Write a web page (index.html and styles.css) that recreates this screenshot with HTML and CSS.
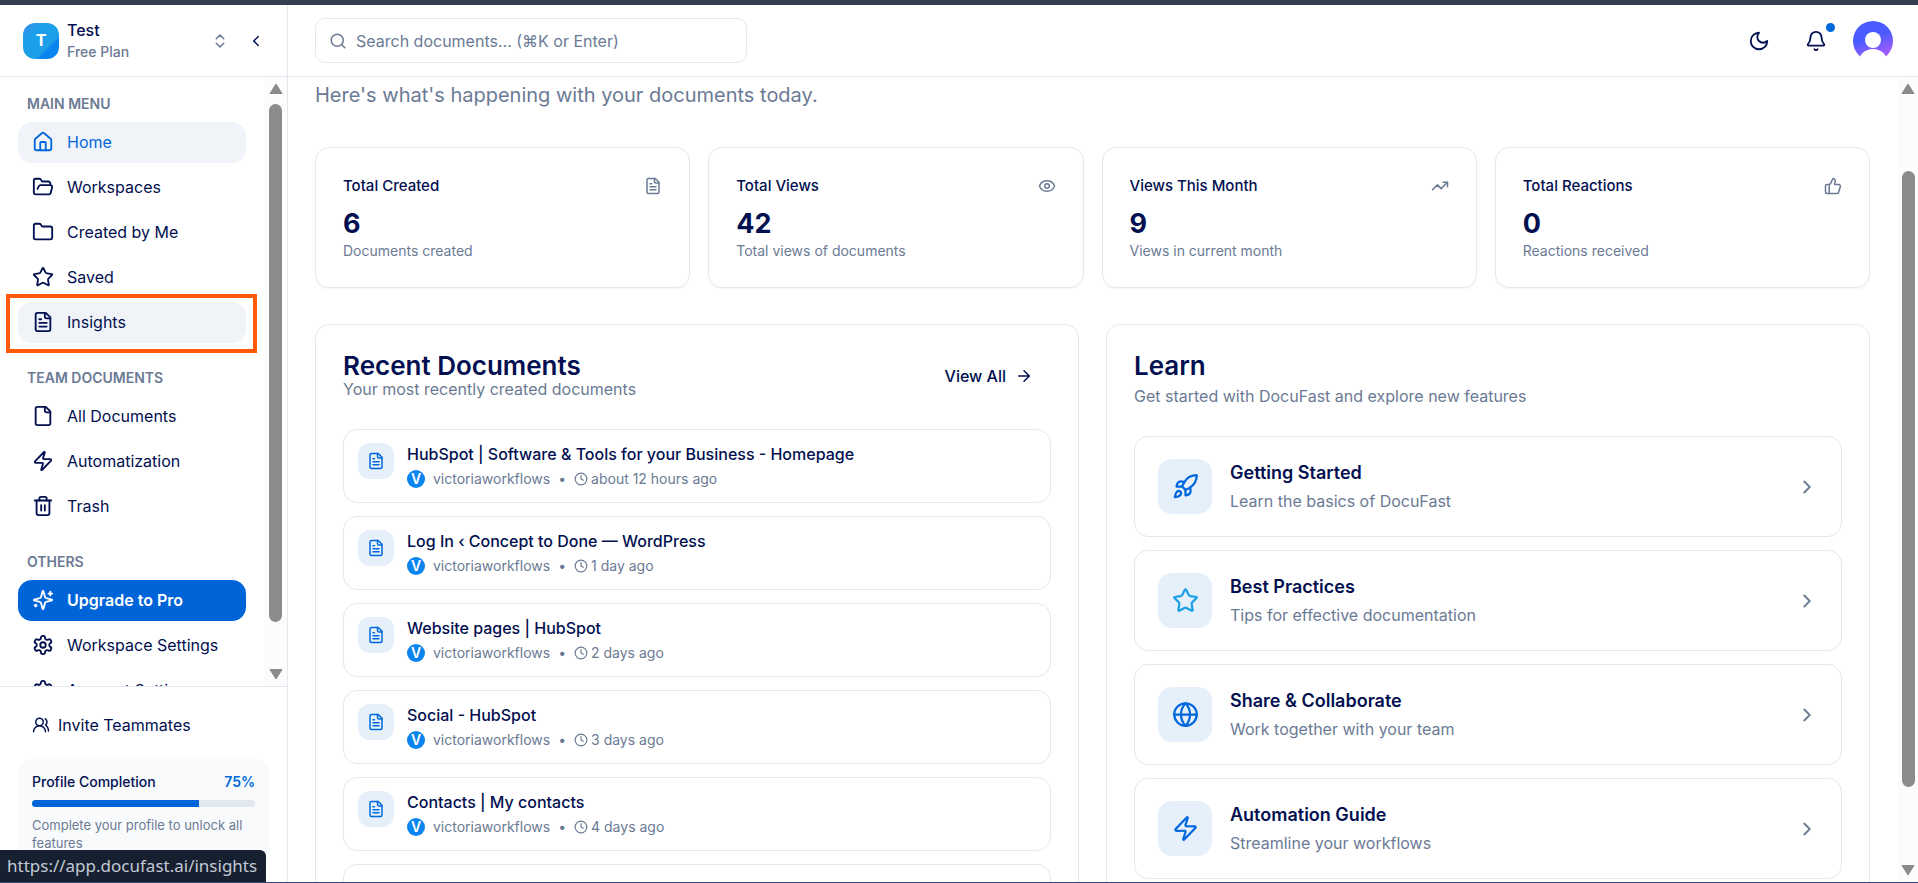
FILE: index.html
```html
<!DOCTYPE html>
<html lang="en">

<head>
    <meta charset="UTF-8">
    <meta name="viewport" content="width=device-width, initial-scale=1.0">
    <title>DocuFast</title>
    <link rel="stylesheet" href="styles.css">
</head>

<body>
    <!-- Icon set -->
    <svg class="icon-set" aria-hidden="true">
        <symbol id="home" viewBox="0 0 24 24"><path d="M15 21v-8a1 1 0 0 0-1-1h-4a1 1 0 0 0-1 1v8"/><path d="M3 10a2 2 0 0 1 .709-1.528l7-5.999a2 2 0 0 1 2.582 0l7 5.999A2 2 0 0 1 21 10v9a2 2 0 0 1-2 2H5a2 2 0 0 1-2-2z"/></symbol>
        <symbol id="folder-open" viewBox="0 0 24 24"><path d="m6 14 1.5-2.9A2 2 0 0 1 9.24 10H20a2 2 0 0 1 1.94 2.5l-1.54 6a2 2 0 0 1-1.95 1.5H4a2 2 0 0 1-2-2V5a2 2 0 0 1 2-2h3.9a2 2 0 0 1 1.69.9l.81 1.2a2 2 0 0 0 1.67.9H18a2 2 0 0 1 2 2v2"/></symbol>
        <symbol id="folder" viewBox="0 0 24 24"><path d="M20 20a2 2 0 0 0 2-2V8a2 2 0 0 0-2-2h-7.9a2 2 0 0 1-1.69-.9L9.6 3.9A2 2 0 0 0 7.93 3H4a2 2 0 0 0-2 2v13a2 2 0 0 0 2 2Z"/></symbol>
        <symbol id="star" viewBox="0 0 24 24"><path d="M11.525 2.295a.53.53 0 0 1 .95 0l2.31 4.679a2.123 2.123 0 0 0 1.595 1.16l5.166.756a.53.53 0 0 1 .294.904l-3.736 3.638a2.123 2.123 0 0 0-.611 1.878l.882 5.14a.53.53 0 0 1-.771.56l-4.618-2.428a2.122 2.122 0 0 0-1.973 0L6.396 21.01a.53.53 0 0 1-.77-.56l.881-5.139a2.122 2.122 0 0 0-.611-1.879L2.16 9.795a.53.53 0 0 1 .294-.906l5.165-.755a2.122 2.122 0 0 0 1.597-1.16z"/></symbol>
        <symbol id="file-text" viewBox="0 0 24 24"><path d="M15 2H6a2 2 0 0 0-2 2v16a2 2 0 0 0 2 2h12a2 2 0 0 0 2-2V7Z"/><path d="M14 2v4a2 2 0 0 0 2 2h4"/><path d="M10 9H8"/><path d="M16 13H8"/><path d="M16 17H8"/></symbol>
        <symbol id="file" viewBox="0 0 24 24"><path d="M15 2H6a2 2 0 0 0-2 2v16a2 2 0 0 0 2 2h12a2 2 0 0 0 2-2V7Z"/><path d="M14 2v4a2 2 0 0 0 2 2h4"/></symbol>
        <symbol id="zap" viewBox="0 0 24 24"><path d="M4 14a1 1 0 0 1-.78-1.63l9.9-10.2a.5.5 0 0 1 .86.46l-1.92 6.02A1 1 0 0 0 13 10h7a1 1 0 0 1 .78 1.63l-9.9 10.2a.5.5 0 0 1-.86-.46l1.92-6.02A1 1 0 0 0 11 14z"/></symbol>
        <symbol id="trash" viewBox="0 0 24 24"><path d="M3 6h18"/><path d="M19 6v14c0 1-1 2-2 2H7c-1 0-2-1-2-2V6"/><path d="M8 6V4c0-1 1-2 2-2h4c1 0 2 1 2 2v2"/><path d="M10 11v6"/><path d="M14 11v6"/></symbol>
        <symbol id="sparkles" viewBox="0 0 24 24"><path d="M9.937 15.5A2 2 0 0 0 8.5 14.063l-6.135-1.582a.5.5 0 0 1 0-.962L8.5 9.936A2 2 0 0 0 9.937 8.5l1.582-6.135a.5.5 0 0 1 .963 0L14.063 8.5A2 2 0 0 0 15.5 9.937l6.135 1.581a.5.5 0 0 1 0 .964L15.5 14.063a2 2 0 0 0-1.437 1.437l-1.582 6.135a.5.5 0 0 1-.963 0z"/><path d="M20 3v4"/><path d="M22 5h-4"/><path d="M4 17v2"/><path d="M5 18H3"/></symbol>
        <symbol id="settings" viewBox="0 0 24 24"><path d="M12.22 2h-.44a2 2 0 0 0-2 2v.18a2 2 0 0 1-1 1.73l-.43.25a2 2 0 0 1-2 0l-.15-.08a2 2 0 0 0-2.73.73l-.22.38a2 2 0 0 0 .73 2.73l.15.1a2 2 0 0 1 1 1.72v.51a2 2 0 0 1-1 1.74l-.15.09a2 2 0 0 0-.73 2.73l.22.38a2 2 0 0 0 2.73.73l.15-.08a2 2 0 0 1 2 0l.43.25a2 2 0 0 1 1 1.73V20a2 2 0 0 0 2 2h.44a2 2 0 0 0 2-2v-.18a2 2 0 0 1 1-1.73l.43-.25a2 2 0 0 1 2 0l.15.08a2 2 0 0 0 2.73-.73l.22-.39a2 2 0 0 0-.73-2.73l-.15-.08a2 2 0 0 1-1-1.74v-.5a2 2 0 0 1 1-1.74l.15-.09a2 2 0 0 0 .73-2.73l-.22-.38a2 2 0 0 0-2.73-.73l-.15.08a2 2 0 0 1-2 0l-.43-.25a2 2 0 0 1-1-1.73V4a2 2 0 0 0-2-2z"/><circle cx="12" cy="12" r="3"/></symbol>
        <symbol id="users" viewBox="0 0 24 24"><path d="M18 21a8 8 0 0 0-16 0"/><circle cx="10" cy="8" r="5"/><path d="M22 20c0-3.37-2-6.5-4-8a5 5 0 0 0-.45-8.3"/></symbol>
        <symbol id="search" viewBox="0 0 24 24"><circle cx="11" cy="11" r="8"/><path d="m21 21-4.3-4.3"/></symbol>
        <symbol id="up-down" viewBox="0 0 24 24"><path d="m7 15 5 5 5-5"/><path d="m7 9 5-5 5 5"/></symbol>
        <symbol id="chevron-left" viewBox="0 0 24 24"><path d="m15 18-6-6 6-6"/></symbol>
        <symbol id="chevron-right" viewBox="0 0 24 24"><path d="m9 18 6-6-6-6"/></symbol>
        <symbol id="arrow-right" viewBox="0 0 24 24"><path d="M5 12h14"/><path d="m12 5 7 7-7 7"/></symbol>
        <symbol id="eye" viewBox="0 0 24 24"><path d="M2.062 12.348a1 1 0 0 1 0-.696 10.75 10.75 0 0 1 19.876 0 1 1 0 0 1 0 .696 10.75 10.75 0 0 1-19.876 0"/><circle cx="12" cy="12" r="3"/></symbol>
        <symbol id="trending-up" viewBox="0 0 24 24"><path d="m22 7-8.5 8.5-5-5L2 17"/><path d="M16 7h6v6"/></symbol>
        <symbol id="thumbs-up" viewBox="0 0 24 24"><path d="M7 10v12"/><path d="M15 5.88 14 10h5.83a2 2 0 0 1 1.92 2.56l-2.33 8A2 2 0 0 1 17.5 22H4a2 2 0 0 1-2-2v-8a2 2 0 0 1 2-2h2.76a2 2 0 0 0 1.79-1.11L12 2a3.13 3.13 0 0 1 3 3.88Z"/></symbol>
        <symbol id="moon" viewBox="0 0 24 24"><path d="M12 3a6 6 0 0 0 9 9 9 9 0 1 1-9-9Z"/></symbol>
        <symbol id="bell" viewBox="0 0 24 24"><path d="M10.268 21a2 2 0 0 0 3.464 0"/><path d="M3.262 15.326A1 1 0 0 0 4 17h16a1 1 0 0 0 .74-1.673C19.41 13.956 18 12.499 18 8A6 6 0 0 0 6 8c0 4.499-1.411 5.956-2.738 7.326"/></symbol>
        <symbol id="clock" viewBox="0 0 24 24"><circle cx="12" cy="12" r="10"/><path d="M12 6v6l4 2"/></symbol>
        <symbol id="rocket" viewBox="0 0 24 24"><path d="M4.5 16.5c-1.5 1.26-2 5-2 5s3.74-.5 5-2c.71-.84.7-2.13-.09-2.91a2.18 2.18 0 0 0-2.91-.09z"/><path d="m12 15-3-3a22 22 0 0 1 2-3.95A12.88 12.88 0 0 1 22 2c0 2.72-.78 7.5-6 11a22.35 22.35 0 0 1-4 2z"/><path d="M9 12H4s.55-3.03 2-4c1.62-1.08 5 0 5 0"/><path d="M12 15v5s3.03-.55 4-2c1.08-1.62 0-5 0-5"/></symbol>
        <symbol id="globe" viewBox="0 0 24 24"><circle cx="12" cy="12" r="10"/><path d="M12 2a14.5 14.5 0 0 0 0 20 14.5 14.5 0 0 0 0-20"/><path d="M2 12h20"/></symbol>
        <symbol id="scroll-up" viewBox="0 0 14 12"><path d="M7 1 13 10.5H1Z"/></symbol>
        <symbol id="scroll-down" viewBox="0 0 14 12"><path d="M7 11 1 1.5h12Z"/></symbol>
    </svg>

    <div class="app">
        <aside class="sidebar">
            <div class="workspace">
                <div class="workspace-logo">T</div>
                <div class="workspace-info">
                    <div class="workspace-name">Test</div>
                    <div class="workspace-plan">Free Plan</div>
                </div>
                <button class="icon-btn muted" aria-label="Switch workspace"><svg class="icon icon-sm"><use href="#up-down"/></svg></button>
                <button class="icon-btn" aria-label="Collapse sidebar"><svg class="icon icon-sm"><use href="#chevron-left"/></svg></button>
            </div>

            <div class="sidebar-scroll">
                <nav class="menu">
                    <section class="menu-group">
                        <h2 class="menu-label">MAIN MENU</h2>
                        <a class="menu-item active" href="#"><svg class="icon"><use href="#home"/></svg>Home</a>
                        <a class="menu-item" href="#"><svg class="icon"><use href="#folder-open"/></svg>Workspaces</a>
                        <a class="menu-item" href="#"><svg class="icon"><use href="#folder"/></svg>Created by Me</a>
                        <a class="menu-item" href="#"><svg class="icon"><use href="#star"/></svg>Saved</a>
                        <a class="menu-item hovered" href="#"><svg class="icon"><use href="#file-text"/></svg>Insights</a>
                    </section>
                    <section class="menu-group">
                        <h2 class="menu-label">TEAM DOCUMENTS</h2>
                        <a class="menu-item" href="#"><svg class="icon"><use href="#file"/></svg>All Documents</a>
                        <a class="menu-item" href="#"><svg class="icon"><use href="#zap"/></svg>Automatization</a>
                        <a class="menu-item" href="#"><svg class="icon"><use href="#trash"/></svg>Trash</a>
                    </section>
                    <section class="menu-group">
                        <h2 class="menu-label">OTHERS</h2>
                        <a class="menu-item upgrade" href="#"><svg class="icon"><use href="#sparkles"/></svg>Upgrade to Pro</a>
                        <a class="menu-item" href="#"><svg class="icon"><use href="#settings"/></svg>Workspace Settings</a>
                        <a class="menu-item" href="#"><svg class="icon"><use href="#settings"/></svg>Account Settings</a>
                    </section>
                </nav>
                <div class="scrollbar">
                    <svg class="scroll-arrow"><use href="#scroll-up"/></svg>
                    <div class="scroll-track menu-track"><div class="scroll-thumb"></div></div>
                    <svg class="scroll-arrow"><use href="#scroll-down"/></svg>
                </div>
            </div>

            <div class="sidebar-footer">
                <a class="invite" href="#"><svg class="icon icon-sm"><use href="#users"/></svg>Invite Teammates</a>
                <div class="profile-card">
                    <div class="profile-head">
                        <span>Profile Completion</span>
                        <span class="profile-percent">75%</span>
                    </div>
                    <div class="progress"><div class="progress-bar" style="width: 75%"></div></div>
                    <p class="profile-text">Complete your profile to unlock all features</p>
                </div>
            </div>
        </aside>

        <div class="page">
            <header class="topbar">
                <label class="search">
                    <svg class="icon icon-sm"><use href="#search"/></svg>
                    <input type="text" placeholder="Search documents... (⌘K or Enter)" aria-label="Search documents">
                </label>
                <div class="topbar-actions">
                    <button class="action-btn" aria-label="Toggle dark mode"><svg class="icon"><use href="#moon"/></svg></button>
                    <button class="action-btn" aria-label="Notifications"><svg class="icon"><use href="#bell"/></svg><span class="dot"></span></button>
                    <button class="action-btn" aria-label="Account">
                        <svg class="avatar" viewBox="0 0 40 40">
                            <defs>
                                <linearGradient id="avatar-fill" x1="0.3" y1="0" x2="0.7" y2="1">
                                    <stop offset="0.45" stop-color="#4a5cff"/>
                                    <stop offset="0.9" stop-color="#9a5cff"/>
                                </linearGradient>
                                <clipPath id="avatar-clip"><circle cx="20" cy="20" r="20"/></clipPath>
                            </defs>
                            <g clip-path="url(#avatar-clip)">
                                <rect width="40" height="36" fill="url(#avatar-fill)"/>
                                <circle cx="20" cy="19" r="8" fill="#fff"/>
                                <circle cx="20" cy="43.5" r="15.4" fill="#fff"/>
                            </g>
                        </svg>
                    </button>
                </div>
            </header>

            <div class="page-scroll">
                <main class="content">
                    <p class="intro">Here's what's happening with your documents today.</p>

                    <div class="stats">
                        <div class="stat">
                            <div class="stat-head"><h3>Total Created</h3><svg class="icon icon-sm"><use href="#file-text"/></svg></div>
                            <div class="stat-value">6</div>
                            <p>Documents created</p>
                        </div>
                        <div class="stat">
                            <div class="stat-head"><h3>Total Views</h3><svg class="icon icon-sm"><use href="#eye"/></svg></div>
                            <div class="stat-value">42</div>
                            <p>Total views of documents</p>
                        </div>
                        <div class="stat">
                            <div class="stat-head"><h3>Views This Month</h3><svg class="icon icon-sm"><use href="#trending-up"/></svg></div>
                            <div class="stat-value">9</div>
                            <p>Views in current month</p>
                        </div>
                        <div class="stat">
                            <div class="stat-head"><h3>Total Reactions</h3><svg class="icon icon-sm"><use href="#thumbs-up"/></svg></div>
                            <div class="stat-value">0</div>
                            <p>Reactions received</p>
                        </div>
                    </div>

                    <div class="panels">
                        <section class="panel">
                            <div class="recent-head">
                                <div>
                                    <h2>Recent Documents</h2>
                                    <p>Your most recently created documents</p>
                                </div>
                                <button class="view-all">View All <svg class="icon icon-sm"><use href="#arrow-right"/></svg></button>
                            </div>
                            <div class="list">
                                <a class="doc" href="#">
                                    <span class="doc-icon"><svg class="icon icon-sm"><use href="#file-text"/></svg></span>
                                    <span class="doc-body">
                                        <span class="doc-title">HubSpot | Software &amp; Tools for your Business - Homepage</span>
                                        <span class="doc-meta"><span class="user-badge">V</span>victoriaworkflows<span class="bullet">•</span><span class="doc-time"><svg class="icon icon-xs"><use href="#clock"/></svg>about 12 hours ago</span></span>
                                    </span>
                                </a>
                                <a class="doc" href="#">
                                    <span class="doc-icon"><svg class="icon icon-sm"><use href="#file-text"/></svg></span>
                                    <span class="doc-body">
                                        <span class="doc-title">Log In ‹ Concept to Done — WordPress</span>
                                        <span class="doc-meta"><span class="user-badge">V</span>victoriaworkflows<span class="bullet">•</span><span class="doc-time"><svg class="icon icon-xs"><use href="#clock"/></svg>1 day ago</span></span>
                                    </span>
                                </a>
                                <a class="doc" href="#">
                                    <span class="doc-icon"><svg class="icon icon-sm"><use href="#file-text"/></svg></span>
                                    <span class="doc-body">
                                        <span class="doc-title">Website pages | HubSpot</span>
                                        <span class="doc-meta"><span class="user-badge">V</span>victoriaworkflows<span class="bullet">•</span><span class="doc-time"><svg class="icon icon-xs"><use href="#clock"/></svg>2 days ago</span></span>
                                    </span>
                                </a>
                                <a class="doc" href="#">
                                    <span class="doc-icon"><svg class="icon icon-sm"><use href="#file-text"/></svg></span>
                                    <span class="doc-body">
                                        <span class="doc-title">Social - HubSpot</span>
                                        <span class="doc-meta"><span class="user-badge">V</span>victoriaworkflows<span class="bullet">•</span><span class="doc-time"><svg class="icon icon-xs"><use href="#clock"/></svg>3 days ago</span></span>
                                    </span>
                                </a>
                                <a class="doc" href="#">
                                    <span class="doc-icon"><svg class="icon icon-sm"><use href="#file-text"/></svg></span>
                                    <span class="doc-body">
                                        <span class="doc-title">Contacts | My contacts</span>
                                        <span class="doc-meta"><span class="user-badge">V</span>victoriaworkflows<span class="bullet">•</span><span class="doc-time"><svg class="icon icon-xs"><use href="#clock"/></svg>4 days ago</span></span>
                                    </span>
                                </a>
                                <a class="doc" href="#" aria-label="Document"></a>
                            </div>
                        </section>

                        <section class="panel">
                            <div class="learn-head">
                                <h2>Learn</h2>
                                <p>Get started with DocuFast and explore new features</p>
                            </div>
                            <div class="list">
                                <a class="guide" href="#">
                                    <span class="guide-icon"><svg class="icon icon-lg"><use href="#rocket"/></svg></span>
                                    <span class="guide-body"><span class="guide-title">Getting Started</span><span class="guide-text">Learn the basics of DocuFast</span></span>
                                    <svg class="icon"><use href="#chevron-right"/></svg>
                                </a>
                                <a class="guide" href="#">
                                    <span class="guide-icon sky"><svg class="icon icon-lg"><use href="#star"/></svg></span>
                                    <span class="guide-body"><span class="guide-title">Best Practices</span><span class="guide-text">Tips for effective documentation</span></span>
                                    <svg class="icon"><use href="#chevron-right"/></svg>
                                </a>
                                <a class="guide" href="#">
                                    <span class="guide-icon"><svg class="icon icon-lg"><use href="#globe"/></svg></span>
                                    <span class="guide-body"><span class="guide-title">Share &amp; Collaborate</span><span class="guide-text">Work together with your team</span></span>
                                    <svg class="icon"><use href="#chevron-right"/></svg>
                                </a>
                                <a class="guide" href="#">
                                    <span class="guide-icon"><svg class="icon icon-lg"><use href="#zap"/></svg></span>
                                    <span class="guide-body"><span class="guide-title">Automation Guide</span><span class="guide-text">Streamline your workflows</span></span>
                                    <svg class="icon"><use href="#chevron-right"/></svg>
                                </a>
                            </div>
                        </section>
                    </div>
                </main>
                <div class="scrollbar">
                    <svg class="scroll-arrow"><use href="#scroll-up"/></svg>
                    <div class="scroll-track page-track"><div class="scroll-thumb"></div></div>
                    <svg class="scroll-arrow"><use href="#scroll-down"/></svg>
                </div>
            </div>
        </div>
    </div>

    <div class="link-status">https://app.docufast.ai/insights</div>
</body>

</html>
```
FILE: styles.css
```css
* {
    box-sizing: border-box;
}

body {
    margin: 0;
    font-family: Inter, "Liberation Sans", sans-serif;
    font-size: 16px;
    line-height: 22px;
    color: #020f50;
    background-color: #fff;
}

h2,
h3,
p {
    margin: 0;
}

a {
    color: inherit;
    text-decoration: none;
}

button {
    padding: 0;
    font: inherit;
    color: inherit;
    background: none;
    border: none;
    cursor: pointer;
}

/* Icons */
.icon-set {
    display: none;
}

.icon {
    flex: none;
    width: 22px;
    height: 22px;
    fill: none;
    stroke: currentColor;
    stroke-width: 2;
    stroke-linecap: round;
    stroke-linejoin: round;
}

.icon-xs {
    width: 14px;
    height: 14px;
}

.icon-sm {
    width: 18px;
    height: 18px;
}

.icon-lg {
    width: 27px;
    height: 27px;
}

.app {
    display: flex;
    height: 100vh;
    border-top: 5px solid #353f4f;
    border-bottom: 1px solid #344a7c;
}

/* Sidebar */
.sidebar {
    flex: none;
    display: flex;
    flex-direction: column;
    width: 288px;
    border-right: 1px solid #e2e8f0;
}

.workspace {
    flex: none;
    display: flex;
    align-items: center;
    height: 72px;
    padding: 0 22px 0 23px;
    border-bottom: 1px solid #e2e8f0;
}

.workspace-logo {
    width: 36px;
    height: 36px;
    margin-right: 8px;
    border-radius: 12px;
    background: linear-gradient(135deg, #3b8ae8 0%, #1a9fe8 30%, #1a9fe8 68%, #0a84ee 72%);
    color: #fff;
    font-weight: 700;
    line-height: 34px;
    text-align: center;
}

.workspace-info {
    flex: 1;
}

.workspace-name {
    font-weight: 500;
}

.workspace-plan {
    font-size: 14px;
    font-weight: 500;
    color: #6b7a94;
}

.icon-btn {
    display: flex;
    margin-left: 18px;
}

.muted {
    color: #6b7a94;
}

.sidebar-scroll,
.page-scroll {
    flex: 1;
    display: flex;
    min-height: 0;
}

.menu {
    flex: 1;
    display: flex;
    flex-direction: column;
    gap: 17px;
    padding: 9px 18px 0;
    overflow: hidden;
}

.menu-group {
    display: flex;
    flex-direction: column;
    gap: 4px;
}

.menu-label {
    padding: 9px 9px 5px;
    font-size: 14px;
    font-weight: 600;
    line-height: 18px;
    color: #6b7a94;
}

.menu-item {
    position: relative;
    display: flex;
    align-items: center;
    gap: 13px;
    height: 41px;
    padding: 0 14px 2px;
    border-radius: 14px;
}

.menu-item:hover,
.hovered,
.active {
    background-color: #f0f4f9;
}

.active {
    color: #0068dc;
}

.upgrade,
.upgrade:hover {
    background-color: #0064d9;
    color: #fff;
    font-weight: 600;
}

/* Frame around the highlighted menu item */
.hovered::after {
    content: "";
    position: absolute;
    inset: -8px -11px -10px -12px;
    border: 4px solid #ff5a05;
}

.scrollbar {
    flex: none;
    display: flex;
    flex-direction: column;
    align-items: center;
    width: 23px;
    padding: 6px 0;
    background-color: #fcfcfc;
}

.page-scroll .scrollbar {
    width: 20px;
}

.scroll-arrow {
    flex: none;
    width: 14px;
    height: 12px;
    fill: #8b8b8b;
    stroke: #8b8b8b;
    stroke-linejoin: round;
}

.scroll-track {
    flex: 1;
    display: flex;
    flex-direction: column;
    width: 13px;
    padding: 5px 0;
}

.scroll-track::before,
.scroll-track::after {
    content: "";
}

.scroll-thumb {
    border-radius: 7px;
    background-color: #8b8b8b;
}

.menu-track::before {
    flex: 4;
}

.menu-track .scroll-thumb {
    flex: 520;
}

.menu-track::after {
    flex: 41;
}

.page-track::before {
    flex: 71;
}

.page-track .scroll-thumb {
    flex: 618;
}

.page-track::after {
    flex: 72;
}

.sidebar-footer {
    flex: none;
    height: 196px;
    padding: 18px;
    border-top: 1px solid #e2e8f0;
    overflow: hidden;
}

.invite {
    display: flex;
    align-items: center;
    gap: 8px;
    height: 39px;
    margin-bottom: 15px;
    padding: 0 14px;
}

.profile-card {
    padding: 14px;
    border-radius: 14px;
    background-color: #f8fafc;
    font-size: 14px;
    line-height: 18px;
}

.profile-head {
    display: flex;
    justify-content: space-between;
    font-weight: 500;
}

.profile-percent {
    color: #0068dc;
    font-weight: 600;
}

.progress {
    height: 7px;
    margin: 9px 0;
    border-radius: 4px;
    background-color: #e2e8f0;
    overflow: hidden;
}

.progress-bar {
    height: 100%;
    background-color: #0064d9;
}

.profile-text {
    font-size: 13px;
    color: #6b7a94;
}

/* Top bar */
.page {
    flex: 1;
    display: flex;
    flex-direction: column;
    min-width: 0;
}

.topbar {
    flex: none;
    display: flex;
    align-items: center;
    justify-content: space-between;
    height: 72px;
    padding: 0 25px 0 27px;
    border-bottom: 1px solid #e2e8f0;
}

.search {
    display: flex;
    align-items: center;
    gap: 9px;
    width: 432px;
    height: 45px;
    padding: 0 13px;
    border: 1px solid #e2e8f0;
    border-radius: 10px;
    color: #6b7a94;
}

.search input {
    flex: 1;
    min-width: 0;
    padding: 0;
    border: none;
    outline: none;
    font: inherit;
    background: none;
}

.search input::placeholder {
    color: #6b7a94;
    opacity: 1;
}

.topbar-actions {
    display: flex;
    gap: 17px;
}

.action-btn {
    position: relative;
    display: flex;
    align-items: center;
    justify-content: center;
    width: 40px;
    height: 40px;
}

.dot {
    position: absolute;
    top: 2px;
    right: 1px;
    width: 9px;
    height: 9px;
    border-radius: 50%;
    background-color: #0068dc;
}

.avatar {
    width: 40px;
    height: 40px;
}

/* Dashboard */
.content {
    flex: 1;
    min-width: 0;
    padding: 4px 28px 0 27px;
    overflow: hidden;
}

.intro {
    margin-bottom: 38px;
    font-size: 20px;
    line-height: 28px;
    color: #6b7a94;
}

.stats {
    display: grid;
    grid-template-columns: repeat(4, 1fr);
    gap: 18px;
    margin-bottom: 36px;
}

.stat {
    padding: 27px;
    border: 1px solid #e2e8f0;
    border-radius: 14px;
    box-shadow: 0 1px 2px rgba(0, 0, 0, 0.05);
}

.stat-head {
    display: flex;
    align-items: center;
    justify-content: space-between;
    margin-bottom: 9px;
    color: #6b7a94;
}

.stat h3 {
    font-size: 15px;
    font-weight: 500;
    color: #020f50;
}

.stat-value {
    font-size: 27px;
    font-weight: 700;
    line-height: 36px;
}

.stat p {
    font-size: 14px;
    line-height: 18px;
    color: #6b7a94;
}

.panels {
    display: grid;
    grid-template-columns: repeat(2, 1fr);
    gap: 27px;
}

.panel {
    padding: 27px;
    border: 1px solid #e2e8f0;
    border-radius: 14px;
}

.panel h2 {
    font-size: 26px;
    font-weight: 600;
    line-height: 27px;
}

.panel p {
    line-height: 20px;
    color: #6b7a94;
}

.recent-head {
    display: flex;
    align-items: center;
    justify-content: space-between;
    margin-bottom: 30px;
}

.view-all {
    display: flex;
    align-items: center;
    gap: 9px;
    padding: 0 18px;
    font-weight: 500;
}

.learn-head {
    margin-bottom: 30px;
}

.learn-head p {
    margin-top: 7px;
}

.list {
    display: flex;
    flex-direction: column;
    gap: 13px;
}

.doc {
    display: flex;
    gap: 13px;
    min-height: 74px;
    padding: 13px 14px;
    border: 1px solid #e2e8f0;
    border-radius: 14px;
}

.doc-icon {
    flex: none;
    display: flex;
    align-items: center;
    justify-content: center;
    width: 36px;
    height: 36px;
    border-radius: 12px;
    background-color: #e6f0fb;
    color: #0068dc;
}

.doc-title {
    display: block;
    margin-bottom: 4px;
    font-weight: 500;
}

.doc-meta {
    display: flex;
    align-items: center;
    font-size: 14px;
    line-height: 20px;
    color: #6b7a94;
}

.user-badge {
    width: 18px;
    height: 18px;
    margin-right: 8px;
    border-radius: 50%;
    background-color: #0a84ee;
    color: #fff;
    font-weight: 600;
    line-height: 18px;
    text-align: center;
}

.bullet {
    margin: 0 8px;
}

.doc-time {
    display: flex;
    align-items: center;
    gap: 3px;
}

.guide {
    display: flex;
    align-items: center;
    gap: 18px;
    padding: 22px 23px;
    border: 1px solid #e2e8f0;
    border-radius: 14px;
    color: #6b7a94;
}

.guide-icon {
    flex: none;
    display: flex;
    align-items: center;
    justify-content: center;
    width: 54px;
    height: 55px;
    border-radius: 14px;
    background-color: #e6f0fb;
    color: #0068dc;
}

.sky {
    color: #1a9fe8;
}

.guide-body {
    flex: 1;
}

.guide-title {
    display: block;
    margin-bottom: 5px;
    font-size: 18px;
    font-weight: 600;
    line-height: 24px;
    color: #020f50;
}

.guide-text {
    display: block;
}

/* Link address shown in the window corner */
.link-status {
    position: fixed;
    left: 0;
    bottom: 1px;
    padding: 0 9px 0 7px;
    border-top-right-radius: 6px;
    background-color: #172030;
    color: #c3cad6;
    font-family: "Noto Sans", sans-serif;
    font-size: 17px;
    line-height: 32px;
}
```
